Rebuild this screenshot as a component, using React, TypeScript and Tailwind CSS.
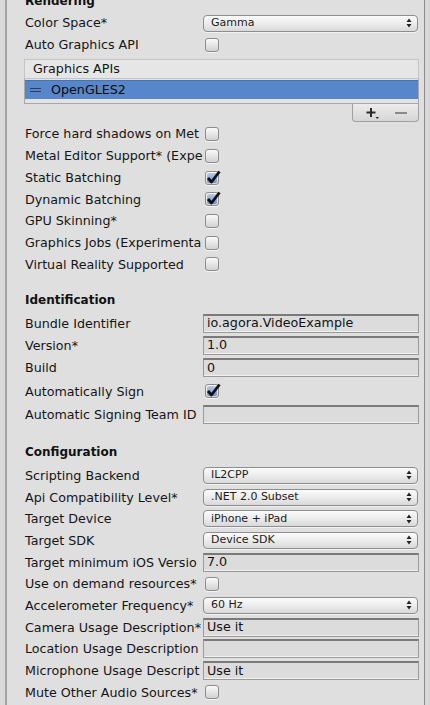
import React from "react";

const font = { fontFamily: '"DejaVu Sans", "Liberation Sans", sans-serif' };

function Arrows() {
  return (
    <svg width="6" height="10" viewBox="0 0 6 10" className="shrink-0">
      <path d="M3 0.5 L5.5 4 L0.5 4 Z" fill="#222" />
      <path d="M3 9.5 L5.5 6 L0.5 6 Z" fill="#222" />
    </svg>
  );
}

function Check({ on }: { on?: boolean }) {
  return (
    <div className="relative ml-[2px] h-[14px] w-[14px] rounded-[3px] border border-[#8c8c8c] bg-gradient-to-b from-[#fafafa] to-[#d2d2d2] shadow-[0_1px_0_#f4f4f4]">
      {on && (
        <>
          <div className="absolute inset-[1px] rounded-[2px] bg-gradient-to-b from-[#b9cbe8] to-[#6b93d1]" />
          <svg width="16" height="14" viewBox="0 0 16 14" className="absolute -top-[2px] left-[0px]">
            <path d="M2 8 L5.5 12 L13.5 1.5" stroke="#111" strokeWidth="2.8" fill="none" strokeLinejoin="round" />
          </svg>
        </>
      )}
    </div>
  );
}

function Select({ value }: { value: string }) {
  return (
    <div className="flex h-[17px] w-[215px] items-center justify-between rounded-[4px] border border-[#8e8e8e] bg-gradient-to-b from-[#fbfbfb] via-[#ececec] to-[#d9d9d9] pl-[7px] pr-[5px] text-[11px] text-[#1c1c1c] shadow-[0_1px_0_#f2f2f2]">
      <span>{value}</span>
      <Arrows />
    </div>
  );
}

function Field({ value }: { value?: string }) {
  return (
    <div className="flex h-[19px] w-[216px] items-center border border-[#9a9a9a] border-t-[#7a7a7a] border-t-2 bg-[#dcdcdc] pl-[3px] text-[12.7px] leading-none text-[#111] shadow-[inset_0_-1px_0_#f0f0f0]">
      {value}
    </div>
  );
}

function Row({ label, h = "h-[21.7px]", children }: { label: string; h?: string; children?: React.ReactNode }) {
  return (
    <div className={`flex items-center ${h}`}>
      <div className="w-[178px] shrink-0 whitespace-nowrap text-[12.7px] text-[#151515]">{label}</div>
      {children}
    </div>
  );
}

function Header({ title, h }: { title: string; h: string }) {
  return (
    <div className={`flex items-center ${h} text-[12px] font-bold text-[#111]`}>{title}</div>
  );
}

export default function App() {
  return (
    <div className="flex h-[705px] w-[430px] overflow-hidden bg-[#d9d9d9]" style={font}>
      <div className="ml-[5px] w-[420px] shrink-0 border-l-2 border-r border-l-[#a3a3a3] border-r-[#8d8d8d] bg-[#dfdfdf] pl-[18px] pr-[5px]">
        <div className="-mt-[10px]">
          <Header title="Rendering" h="h-[22px]" />
          <Row label="Color Space*" h="h-[22px]">
            <Select value="Gamma" />
          </Row>
          <Row label="Auto Graphics API" h="h-[22px]">
            <Check />
          </Row>

          <div className="ml-[-1px] mt-[3px]">
            <div className="flex h-[20px] items-center border border-[#c4c4c4] bg-[#e6e6e6] pl-[8px] text-[12.7px] text-[#151515]">
              Graphics APIs
            </div>
            <div className="border-x border-b border-[#a8a8a8] bg-[#e2e2e2] pt-[1px] pb-[4px]">
              <div className="flex h-[19px] items-center border-t border-[#4b72b0] bg-[#5886cb] text-[12.7px] text-[#0c0c0c]">
                <div className="ml-[5px] flex w-[11px] flex-col gap-[2px]">
                  <div className="h-px bg-[#2c3f63]" />
                  <div className="h-px bg-[#2c3f63]" />
                </div>
                <span className="ml-[10px]">OpenGLES2</span>
              </div>
            </div>
            <div className="flex justify-end">
              <div className="flex h-[18px] w-[67px] items-center justify-around rounded-b-[4px] border-x border-b border-[#a0a0a0] bg-gradient-to-b from-[#ececec] to-[#d6d6d6] pl-[6px] pr-[4px]">
                <svg width="14" height="12" viewBox="0 0 14 12">
                  <path d="M5 1 V10 M0.5 5.5 H9.5" stroke="#2a2a2a" strokeWidth="2" />
                  <path d="M9.5 10 L13 10 L11.25 12 Z" fill="#2a2a2a" />
                </svg>
                <svg width="12" height="4" viewBox="0 0 12 4">
                  <path d="M0 2 H12" stroke="#8a8a8a" strokeWidth="2" />
                </svg>
              </div>
            </div>
          </div>

          <div className="mt-[1px]">
            <Row label="Force hard shadows on Met" h="h-[22px]"><Check /></Row>
            <Row label="Metal Editor Support* (Expe"><Check /></Row>
            <Row label="Static Batching"><Check on /></Row>
            <Row label="Dynamic Batching"><Check on /></Row>
            <Row label="GPU Skinning*"><Check /></Row>
            <Row label="Graphics Jobs (Experimenta"><Check /></Row>
            <Row label="Virtual Reality Supported"><Check /></Row>
          </div>

          <div className="mt-[13px]">
            <Header title="Identification" h="h-[24px]" />
            <Row label="Bundle Identifier" h="h-[22px]"><Field value="io.agora.VideoExample" /></Row>
            <Row label="Version*" h="h-[22px]"><Field value="1.0" /></Row>
            <Row label="Build" h="h-[23px]"><Field value="0" /></Row>
            <Row label="Automatically Sign" h="h-[24px]"><Check on /></Row>
            <Row label="Automatic Signing Team ID" h="h-[23px]"><Field /></Row>
          </div>

          <div className="mt-[14px]">
            <Header title="Configuration" h="h-[24px]" />
            <Row label="Scripting Backend" h="h-[22px]"><Select value="IL2CPP" /></Row>
            <Row label="Api Compatibility Level*" h="h-[22px]"><Select value=".NET 2.0 Subset" /></Row>
            <Row label="Target Device" h="h-[21.5px]"><Select value="iPhone + iPad" /></Row>
            <Row label="Target SDK" h="h-[21.5px]"><Select value="Device SDK" /></Row>
            <Row label="Target minimum iOS Versio" h="h-[22px]"><Field value="7.0" /></Row>
            <Row label="Use on demand resources*" h="h-[21.5px]"><Check /></Row>
            <Row label="Accelerometer Frequency*" h="h-[21.5px]"><Select value="60 Hz" /></Row>
            <Row label="Camera Usage Description*" h="h-[22px]"><Field value="Use it" /></Row>
            <Row label="Location Usage Description" h="h-[21.5px]"><Field /></Row>
            <Row label="Microphone Usage Descript" h="h-[21.5px]"><Field value="Use it" /></Row>
            <Row label="Mute Other Audio Sources*" h="h-[22px]"><Check /></Row>
          </div>
        </div>
      </div>
    </div>
  );
}
